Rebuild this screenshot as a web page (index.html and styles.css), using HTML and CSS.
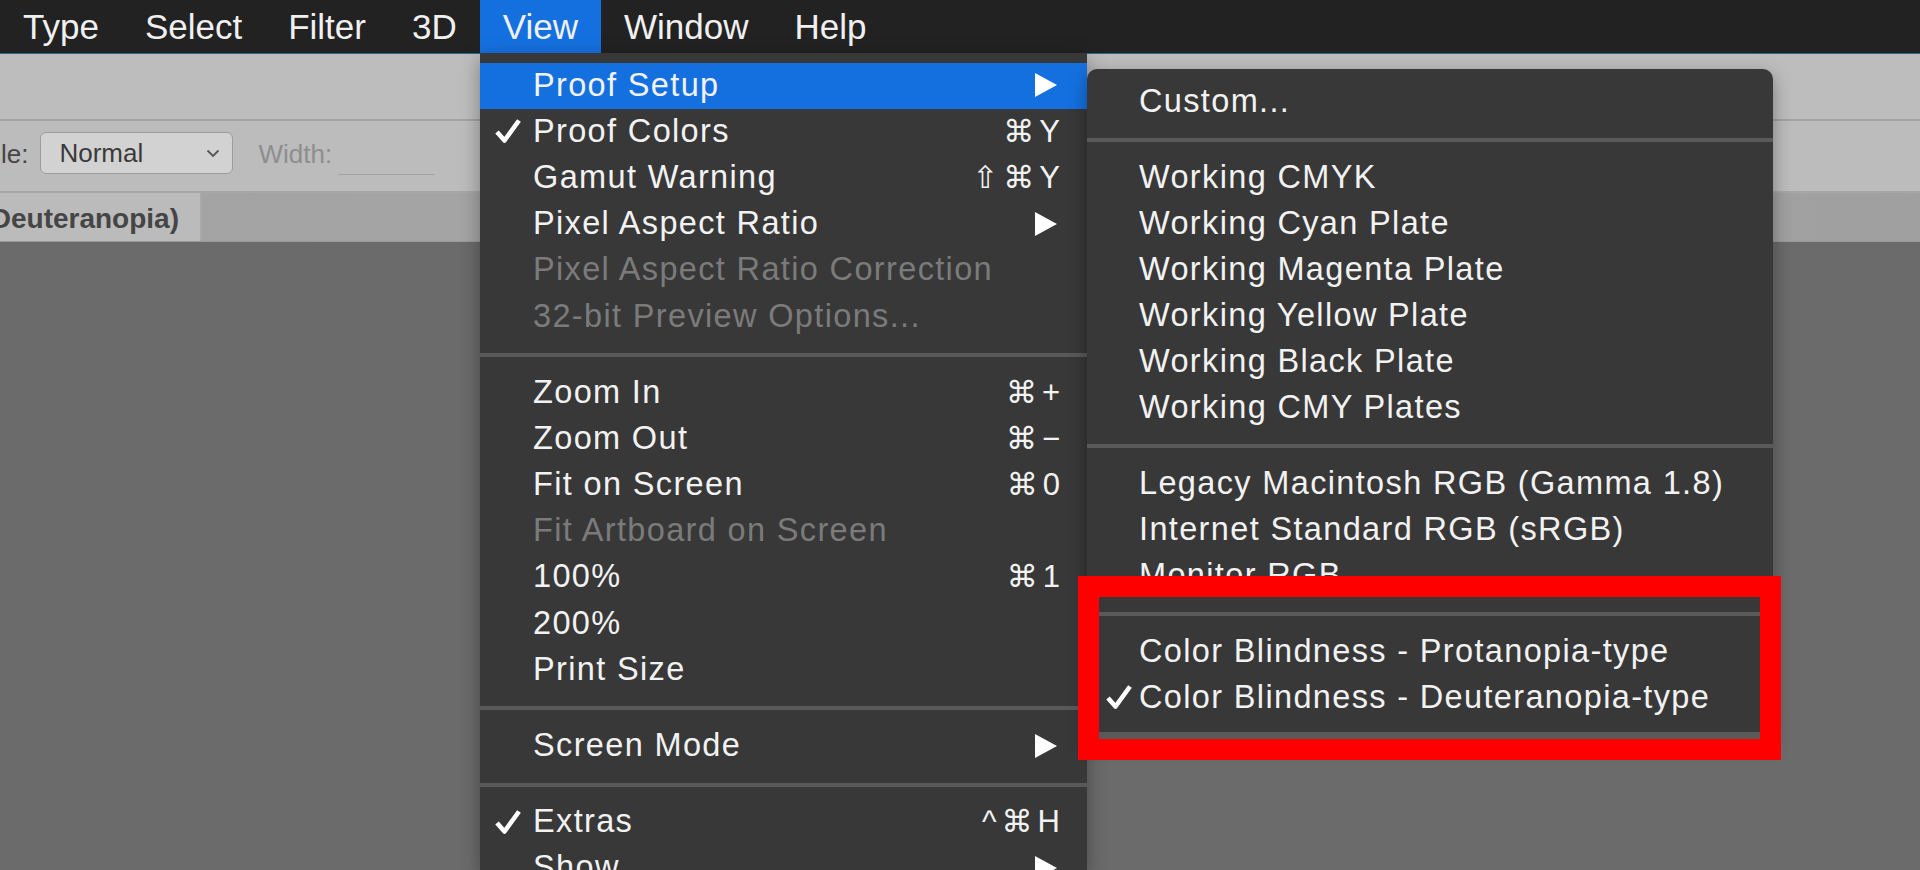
FILE: index.html
```html
<!DOCTYPE html>
<html lang="en">
<head>
<meta charset="utf-8">
<title>View menu - Proof Setup</title>
<link rel="stylesheet" href="styles.css">
</head>
<body>
<div class="app">
  <header class="menubar">
    <span class="mb-item">Type</span>
    <span class="mb-item">Select</span>
    <span class="mb-item">Filter</span>
    <span class="mb-item">3D</span>
    <span class="mb-item active">View</span>
    <span class="mb-item">Window</span>
    <span class="mb-item">Help</span>
  </header>
  <div class="panel-top"></div>
  <div class="options">
    <span class="opt-label">le:</span>
    <div class="select"><span>Normal</span>
      <svg class="chev" width="14" height="9" viewBox="0 0 14 9"><path d="M1.5 1.5 L7 7 L12.5 1.5" fill="none" stroke="#555" stroke-width="1.8"/></svg>
    </div>
    <span class="opt-label dim">Width:</span>
    <span class="field"></span>
  </div>
  <div class="tabs">
    <div class="tab"><span>Untitled-1 @ 100% (RGB/8) (Deuteranopia)</span></div>
  </div>
  <main class="canvas"></main>
</div>

<div class="menu view-menu">
  <div class="item hl"><span class="label">Proof Setup</span><svg class="arrow" width="22" height="24" viewBox="0 0 22 24"><polygon points="0,0 22,12 0,24" fill="#fff"/></svg></div>
  <div class="item"><svg class="check" width="28" height="26" viewBox="0 0 28 26"><path d="M3 14 L10.5 22.5 L25 2.5" fill="none" stroke="#fff" stroke-width="4.6" stroke-linejoin="round"/></svg><span class="label">Proof Colors</span><span class="kbd">⌘Y</span></div>
  <div class="item"><span class="label">Gamut Warning</span><span class="kbd">⇧⌘Y</span></div>
  <div class="item"><span class="label">Pixel Aspect Ratio</span><svg class="arrow" width="22" height="24" viewBox="0 0 22 24"><polygon points="0,0 22,12 0,24" fill="#fff"/></svg></div>
  <div class="item off"><span class="label">Pixel Aspect Ratio Correction</span></div>
  <div class="item off"><span class="label">32-bit Preview Options...</span></div>
  <div class="sep"></div>
  <div class="item"><span class="label">Zoom In</span><span class="kbd">⌘+</span></div>
  <div class="item"><span class="label">Zoom Out</span><span class="kbd">⌘−</span></div>
  <div class="item"><span class="label">Fit on Screen</span><span class="kbd">⌘0</span></div>
  <div class="item off"><span class="label">Fit Artboard on Screen</span></div>
  <div class="item"><span class="label">100%</span><span class="kbd">⌘1</span></div>
  <div class="item"><span class="label">200%</span></div>
  <div class="item"><span class="label">Print Size</span></div>
  <div class="sep"></div>
  <div class="item"><span class="label">Screen Mode</span><svg class="arrow" width="22" height="24" viewBox="0 0 22 24"><polygon points="0,0 22,12 0,24" fill="#fff"/></svg></div>
  <div class="sep"></div>
  <div class="item"><svg class="check" width="28" height="26" viewBox="0 0 28 26"><path d="M3 14 L10.5 22.5 L25 2.5" fill="none" stroke="#fff" stroke-width="4.6" stroke-linejoin="round"/></svg><span class="label">Extras</span><span class="kbd">^⌘H</span></div>
  <div class="item"><span class="label">Show</span><svg class="arrow" width="22" height="24" viewBox="0 0 22 24"><polygon points="0,0 22,12 0,24" fill="#fff"/></svg></div>
</div>

<div class="menu submenu">
  <div class="item"><span class="label">Custom...</span></div>
  <div class="sep"></div>
  <div class="item"><span class="label">Working CMYK</span></div>
  <div class="item"><span class="label">Working Cyan Plate</span></div>
  <div class="item"><span class="label">Working Magenta Plate</span></div>
  <div class="item"><span class="label">Working Yellow Plate</span></div>
  <div class="item"><span class="label">Working Black Plate</span></div>
  <div class="item"><span class="label">Working CMY Plates</span></div>
  <div class="sep"></div>
  <div class="item"><span class="label">Legacy Macintosh RGB (Gamma 1.8)</span></div>
  <div class="item"><span class="label">Internet Standard RGB (sRGB)</span></div>
  <div class="item"><span class="label">Monitor RGB</span></div>
  <div class="sep"></div>
  <div class="item"><span class="label">Color Blindness - Protanopia-type</span></div>
  <div class="item"><svg class="check" width="28" height="26" viewBox="0 0 28 26"><path d="M3 14 L10.5 22.5 L25 2.5" fill="none" stroke="#fff" stroke-width="4.6" stroke-linejoin="round"/></svg><span class="label">Color Blindness - Deuteranopia-type</span></div>
  <div class="sub-end"></div>
</div>

<div class="highlight-box"></div>
</body>
</html>
```

FILE: styles.css
```css
html, body {
  margin: 0;
  padding: 0;
  width: 1920px;
  height: 870px;
  overflow: hidden;
  background: #6b6b6b;
  font-family: "Liberation Sans", Arial, sans-serif;
}

.app {
  display: flex;
  flex-direction: column;
  height: 870px;
}

/* ---------- menubar ---------- */
.menubar {
  display: flex;
  height: 53px;
  background: #222222;
  border-bottom: 1px solid #1d6f8c;
  flex: none;
}
.mb-item {
  display: flex;
  align-items: center;
  padding: 0 23px;
  font-size: 35px;
  color: #f0f0f0;
  height: 53px;
}
.mb-item.active {
  background: #1570df;
}

/* ---------- panels ---------- */
.panel-top {
  height: 65px;
  background: #bdbdbd;
  border-bottom: 2px solid #a3a3a3;
  flex: none;
}
.options {
  height: 70px;
  background: #bcbcbc;
  border-bottom: 2px solid #a7a7a7;
  display: flex;
  align-items: center;
  flex: none;
  font-size: 26px;
  color: #454545;
}
.opt-label {
  padding-left: 1px;
  margin-right: 12px;
  margin-top: -4px;
}
.opt-label.dim {
  color: #8e8e8e;
  margin-left: 24px;
  margin-right: 6px;
}
.select {
  width: 193px;
  height: 42px;
  box-sizing: border-box;
  border: 1.5px solid #9c9c9c;
  border-radius: 6px;
  background: #d2d2d2;
  display: flex;
  align-items: center;
  justify-content: space-between;
  padding: 0 12px 0 18px;
  color: #3a3a3a;
  margin-top: -6px;
}
.field {
  width: 96px;
  height: 30px;
  border-bottom: 1px solid #a2a2a2;
  margin-top: 6px;
}

.tabs {
  height: 48px;
  background: linear-gradient(90deg, #a3a3a3 0%, #a6a6a6 60%, #a0a0a0 100%);
  border-bottom: 1px solid #999;
  display: flex;
  flex: none;
}
.tab {
  width: 202px;
  height: 48px;
  background: #bbbbbb;
  border-right: 2px solid #a9a9a9;
  display: flex;
  align-items: center;
  justify-content: flex-end;
  overflow: hidden;
  white-space: nowrap;
  box-sizing: border-box;
  padding: 3px 21px 0 0;
}
.tab span {
  font-size: 28px;
  font-weight: bold;
  color: #454545;
  flex: none;
}

.canvas {
  flex: 1;
  background: #6b6b6b;
}

/* ---------- menus ---------- */
.menu {
  position: absolute;
  background: #383838;
  box-sizing: border-box;
  font-size: 32.5px;
  letter-spacing: 1.35px;
  color: #f2f2f2;
  box-shadow: 0 6px 18px rgba(0, 0, 0, 0.35);
}
.view-menu {
  left: 480px;
  top: 53px;
  width: 607px;
  height: 817px;
  overflow: hidden;
  padding-top: 10px;
}
.view-menu .item {
  height: 46.2px;
}
.submenu {
  left: 1087px;
  top: 69px;
  width: 686px;
  padding-top: 10px;
  border-radius: 10px 10px 0 0;
}
.item {
  position: relative;
  display: flex;
  align-items: center;
  height: 46px;
  box-sizing: border-box;
  padding: 0 27px 2px 53px;
  white-space: nowrap;
}
.submenu .item {
  padding-left: 52px;
}
.item.hl {
  background: #1570df;
}
.item.off {
  color: #7b7b7b;
}
.label {
  flex: 1;
}
.check {
  position: absolute;
  left: 14px;
  top: 9px;
}
.submenu .check {
  left: 18px;
}
.arrow {
  margin-right: 3px;
}
.kbd {
  font-family: "Liberation Sans", "DejaVu Sans", sans-serif;
  font-size: 31px;
  letter-spacing: 5px;
  margin-right: -5px;
}
.sep {
  height: 30px;
  display: flex;
  align-items: center;
}
.sep::before {
  content: "";
  display: block;
  width: 100%;
  height: 4px;
  background: #595959;
}
.sub-end {
  height: 11px;
  border-bottom: 8px solid #595959;
}

/* ---------- annotation ---------- */
.highlight-box {
  position: absolute;
  left: 1078px;
  top: 576px;
  width: 703px;
  height: 184px;
  box-sizing: border-box;
  border: 21px solid #ff0000;
}
```
